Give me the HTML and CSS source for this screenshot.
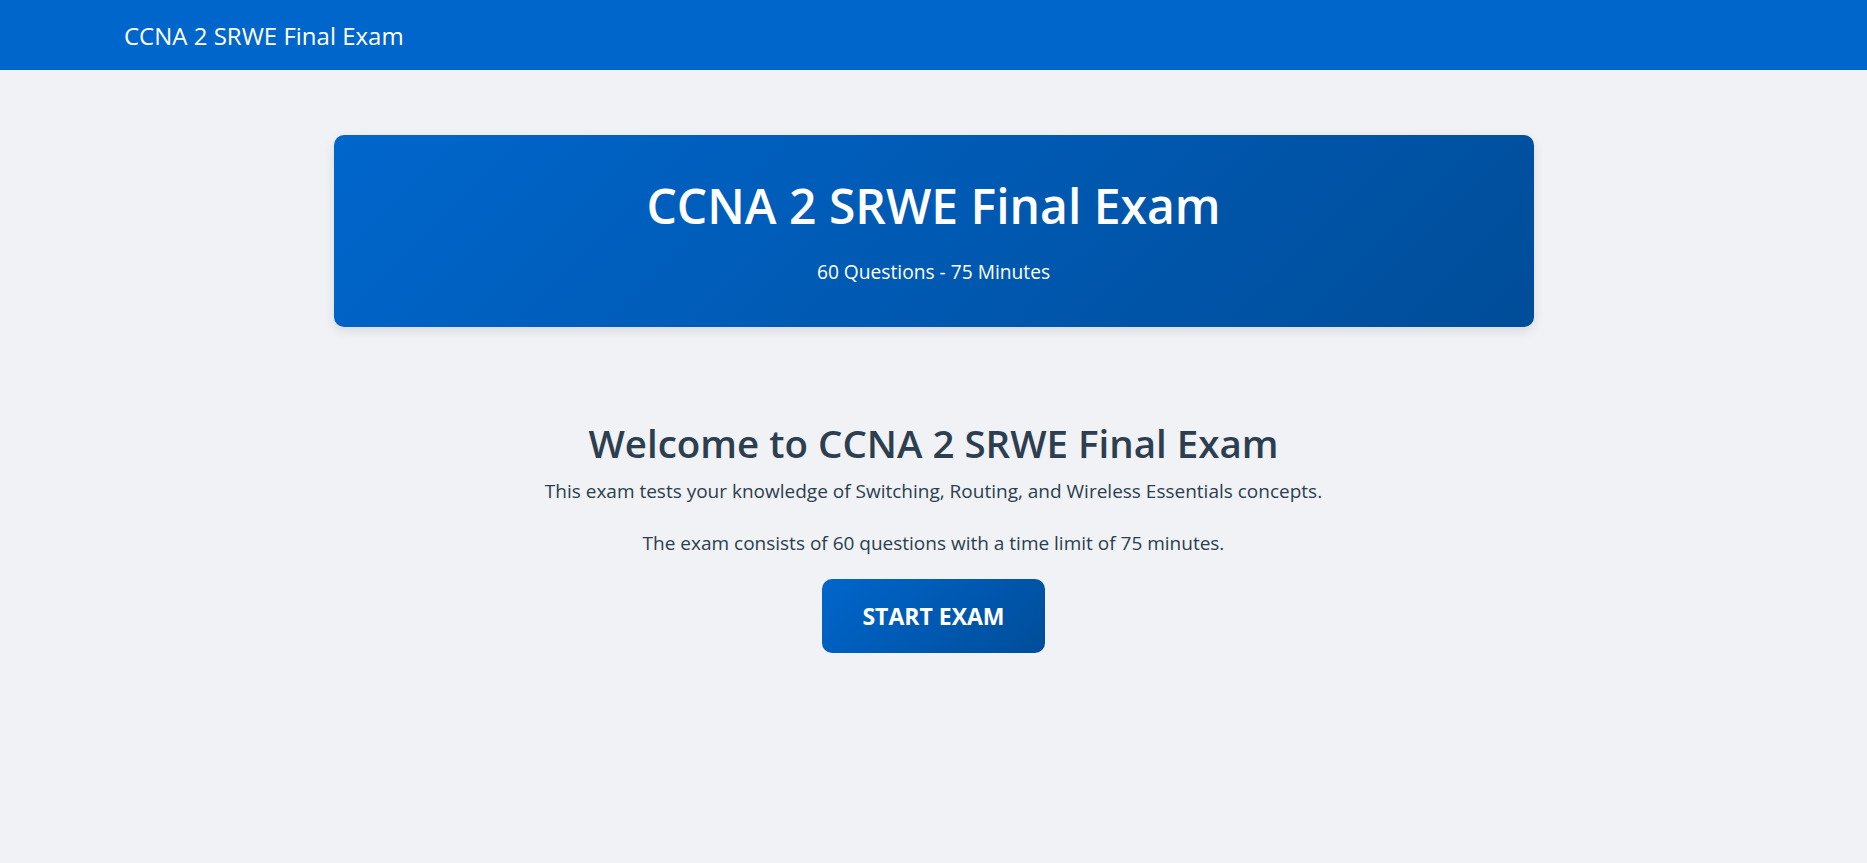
FILE: index.html
```html
<!DOCTYPE html>
<html lang="en">
<head>
<meta charset="utf-8">
<title>CCNA 2 SRWE Final Exam</title>
<link rel="stylesheet" href="styles.css">
</head>
<body>
<header class="topbar">
  <div class="brand">CCNA 2 SRWE Final Exam</div>
</header>
<main class="container">
  <section class="hero">
    <h1 class="hero-title">CCNA 2 SRWE Final Exam</h1>
    <p class="hero-sub">60 Questions - 75 Minutes</p>
  </section>
  <section class="welcome">
    <h2 class="welcome-title">Welcome to CCNA 2 SRWE Final Exam</h2>
    <p class="welcome-text first">This exam tests your knowledge of Switching, Routing, and Wireless Essentials concepts.</p>
    <p class="welcome-text second">The exam consists of 60 questions with a time limit of 75 minutes.</p>
    <button class="start-btn" type="button">START EXAM</button>
  </section>
</main>
</body>
</html>
```

FILE: styles.css
```css
* { box-sizing: border-box; }
html, body {
  margin: 0;
  padding: 0;
}
body {
  background: #f0f2f5;
  color: #2c3e50;
  font-family: "Open Sans", "Noto Sans", sans-serif;
  min-height: 100vh;
}
.topbar {
  height: 70px;
  background: #0066cc;
  display: flex;
  align-items: center;
  padding: 0 124px;
}
.brand {
  color: #ffffff;
  font-size: 24px;
}
.container {
  max-width: 1200px;
  margin: 65px auto 0;
}
.hero {
  background: linear-gradient(135deg, #0066cc 0%, #004d99 100%);
  border-radius: 10px;
  box-shadow: 0 4px 12px rgba(0, 0, 0, 0.1);
  padding: 42px 40px 41px;
  text-align: center;
  color: #ffffff;
}
.hero-title {
  margin: 0 0 22px;
  font-size: 48px;
  line-height: 58px;
  font-weight: 600;
}
.hero-sub {
  margin: 0;
  font-size: 19.2px;
  line-height: 29px;
}
.welcome {
  display: flex;
  flex-direction: column;
  align-items: center;
  text-align: center;
  padding-top: 92px;
}
.welcome-title {
  margin: 0 0 10px;
  font-size: 38.5px;
  line-height: 48px;
  font-weight: 600;
}
.welcome-text {
  margin: 0;
  font-size: 19px;
  line-height: 29px;
}
.welcome-text.first { margin-bottom: 23px; }
.welcome-text.second { margin-bottom: 21px; }
.start-btn {
  height: 74px;
  padding: 0 40px;
  border: none;
  border-radius: 10px;
  background: linear-gradient(135deg, #0066cc 0%, #004d99 100%);
  color: #ffffff;
  font-family: "Open Sans", "Noto Sans", sans-serif;
  font-size: 23px;
  font-weight: 700;
  cursor: pointer;
}
```
